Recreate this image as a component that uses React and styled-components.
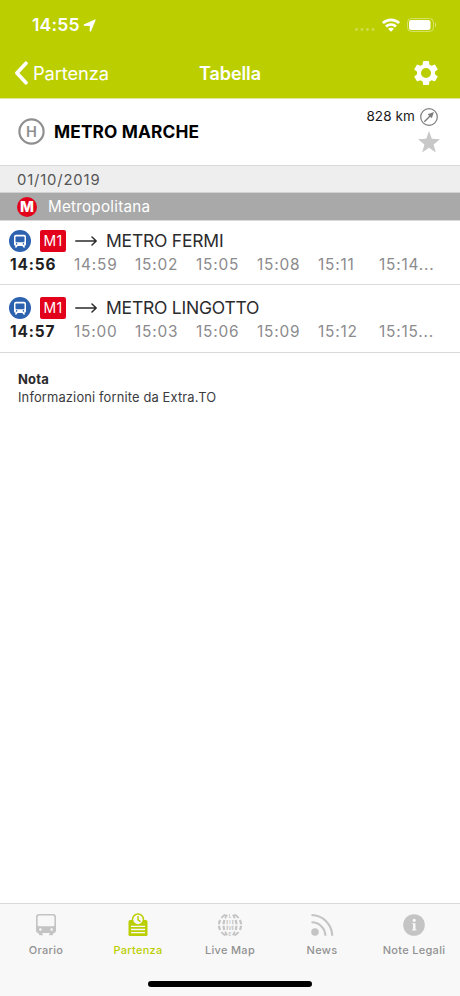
import React from 'react';
import styled, { createGlobalStyle } from 'styled-components';

// Colors
const colors = {
  lime: '#bbcf00',
  white: '#ffffff',
  text: '#2b2b2d',
  muted: '#8b8b8d',
  tabIcon: '#c4c4c4',
  line: '#d9d9d9',
  red: '#e2001a',
  blue: '#2d62ae'
};

const GlobalStyle = createGlobalStyle`
  * {
    box-sizing: border-box;
  }

  body {
    margin: 0;
    font-family: Inter, "Liberation Sans", sans-serif;
    background: ${colors.white};
    color: ${colors.text};
  }

  svg {
    display: block;
    flex: none;
  }
`;

const Screen = styled.div`
  display: flex;
  flex-direction: column;
  width: 460px;
  height: 996px;
  overflow: hidden;
  background: ${colors.white};
`;

const TopBar = styled.header`
  height: 98px;
  flex: none;
  background: ${colors.lime};
  color: ${colors.white};
`;

const StatusBar = styled.div`
  display: flex;
  justify-content: space-between;
  align-items: center;
  height: 50px;
  padding: 0 23px 0 32px;
`;

const StatusGroup = styled.div`
  display: flex;
  align-items: center;
  gap: ${(props) => props.$gap}px;
`;

const Clock = styled.span`
  width: 48px;
  font-size: 17.6px;
  font-weight: 600;
  line-height: 20px;
  letter-spacing: 0.15px;
  white-space: nowrap;
`;

const NavBar = styled.nav`
  display: grid;
  grid-template-columns: 1fr 100px 1fr;
  align-items: center;
  height: 46px;
  padding: 0 22px 0 14px;
`;

const BackButton = styled.button`
  display: flex;
  align-items: center;
  gap: 5px;
  padding: 0;
  border: none;
  background: none;
  color: inherit;
  font-family: inherit;
  font-size: 18.3px;
  line-height: 24px;
  letter-spacing: -0.1px;
`;

const Title = styled.h1`
  margin: 1px -8px 0 0;
  font-size: 18px;
  font-weight: 600;
  line-height: 24px;
  letter-spacing: -0.1px;
  text-align: center;
`;

const SettingsButton = styled.button`
  justify-self: end;
  padding: 0;
  border: none;
  background: none;
  color: inherit;
`;

const StopHeader = styled.section`
  display: flex;
  align-items: center;
  height: 67px;
  flex: none;
  padding: 0 20px 1px 18px;
  border-top: 1px solid #dde7a0;
`;

const StopName = styled.h2`
  flex: 1;
  margin: 0 0 0 9px;
  color: #000;
  font-size: 17.3px;
  font-weight: 700;
  line-height: 24px;
  letter-spacing: 0.15px;
`;

const StopActions = styled.div`
  display: flex;
  flex-direction: column;
  align-items: flex-end;
  gap: 5px;
  padding-bottom: 3px;
`;

const Distance = styled.div`
  display: flex;
  align-items: center;
  gap: 5px;
  padding-right: 2px;
  color: #1a1a1a;
  font-size: 13.5px;
  line-height: 19px;
  letter-spacing: 0.1px;
`;

const DateBar = styled.div`
  height: 28px;
  flex: none;
  padding-left: 17px;
  border-top: 1px solid ${colors.line};
  border-bottom: 1px solid #d2d2d2;
  background: #eeeeee;
  color: #555;
  font-size: 14.8px;
  line-height: 28px;
  letter-spacing: 0.85px;
`;

const CategoryBar = styled.div`
  display: flex;
  align-items: center;
  gap: 11px;
  height: 27px;
  flex: none;
  padding: 1px 0 0 17px;
  background: #a9a9a9;
  color: ${colors.white};
  font-size: 15.2px;
  line-height: 26px;
  letter-spacing: 0.25px;
`;

const Departure = styled.article`
  height: ${(props) => (props.$first ? 65 : 68)}px;
  flex: none;
  padding: ${(props) => (props.$first ? 8 : 11)}px 0 0 9px;
  border-top: ${(props) => (props.$first ? `1px solid ${colors.line}` : 'none')};
  border-bottom: 1px solid ${colors.line};
`;

const LineRow = styled.div`
  display: flex;
  align-items: center;
  height: 24px;
`;

const LineBadge = styled.span`
  width: 26px;
  height: 22px;
  margin: 0 9px;
  border-radius: 2px;
  background: ${colors.red};
  color: ${colors.white};
  font-size: 14px;
  line-height: 22px;
  letter-spacing: 0.3px;
  text-align: center;
`;

const Direction = styled.span`
  margin-left: 9px;
  font-size: 17.5px;
  line-height: 24px;
  letter-spacing: -0.22px;
`;

const Times = styled.div`
  display: grid;
  grid-template-columns: 64px repeat(5, 61px) 60px;
  padding-left: 1px;
  line-height: 24px;
`;

const Time = styled.span`
  color: ${(props) => (props.$next ? '#202022' : colors.muted)};
  font-size: 15.4px;
  font-weight: ${(props) => (props.$next ? 700 : 400)};
  letter-spacing: ${(props) => (props.$next ? 0.85 : 0.8)}px;
  white-space: nowrap;
`;

const Note = styled.section`
  flex: 1;
  padding: 17px 18px;
  font-size: 12.9px;
`;

const NoteTitle = styled.h3`
  margin: 0;
  font-size: 13px;
  font-weight: 700;
  line-height: 18px;
  letter-spacing: 0.2px;
`;

const NoteText = styled.p`
  margin: 0;
  color: #3c3c3e;
  line-height: 19px;
  letter-spacing: 0.15px;
`;

const Footer = styled.footer`
  display: flex;
  flex-direction: column;
  align-items: center;
  height: 93px;
  flex: none;
  border-top: 1px solid ${colors.line};
  background: #f8f8f8;
`;

const TabBar = styled.div`
  display: grid;
  grid-template-columns: repeat(5, 1fr);
  width: 460px;
  height: 77px;
`;

const Tab = styled.button`
  display: flex;
  flex-direction: column;
  align-items: center;
  padding: 9px 0 0;
  border: none;
  background: none;
  color: ${(props) => (props.$active ? colors.lime : colors.tabIcon)};
`;

const TabLabel = styled.span`
  margin-top: 5px;
  color: ${(props) => (props.$active ? colors.lime : '#929292')};
  font-family: Inter, "Liberation Sans", sans-serif;
  font-size: 11px;
  font-weight: 500;
  line-height: 16px;
  letter-spacing: 0.3px;
  white-space: nowrap;
`;

const HomeIndicator = styled.div`
  width: 164px;
  height: 6px;
  border-radius: 3px;
  background: #000;
`;

const SvgText = styled.text`
  font-family: Inter, "Liberation Sans", sans-serif;
  font-weight: ${(props) => props.$weight};
  letter-spacing: 0;
  text-anchor: middle;
`;

const LocationIcon = () => (
  <svg width="13" height="13" viewBox="0 0 13 13">
    <path d="M12 1 7.4 12V6.4L1.2 6z" fill="#fff" stroke="#fff" strokeWidth="1.3" strokeLinejoin="round" />
  </svg>
);

const SignalIcon = () => (
  <svg width="20" height="16" viewBox="0 0 20 16">
    {[1.5, 7, 12.5, 18].map((x) => (
      <circle key={x} cx={x} cy="12.5" r="1.4" fill="#fff" opacity=".3" />
    ))}
  </svg>
);

const WifiIcon = () => (
  <svg width="18" height="14" viewBox="0 0 18 14" fill="none" stroke="#fff" strokeWidth="2.7">
    <path d="M.9 5.1C5.4.8 12.6.8 17.1 5.1" />
    <path d="M4 8.5c2.8-2.7 7.2-2.7 10 0" />
    <path d="m9 13.7-2.9-2.9c1.6-1.5 4.2-1.5 5.8 0z" fill="#fff" stroke="none" />
  </svg>
);

const BatteryIcon = () => (
  <svg width="30" height="14" viewBox="0 0 30 14">
    <rect x=".5" y=".5" width="26" height="13" rx="4" fill="none" stroke="#fff" opacity=".4" />
    <rect x="2" y="2" width="21.5" height="10" rx="2.3" fill="#fff" />
    <path d="M28 4.8c1.6.6 1.6 3.8 0 4.4z" fill="#fff" opacity=".45" />
  </svg>
);

const BackIcon = () => (
  <svg width="14" height="24" viewBox="0 0 14 24" fill="none" stroke="#fff" strokeWidth="3.6" strokeLinecap="round" strokeLinejoin="round">
    <path d="M12 2.2 2.9 12 12 21.8" />
  </svg>
);

const GearIcon = () => (
  <svg width="24" height="24" viewBox="2 2 20 20" fill="currentColor">
    <path d="M19.43 12.98c.04-.32.07-.64.07-.98s-.03-.66-.07-.98l2.11-1.65c.19-.15.24-.42.12-.64l-2-3.46c-.12-.22-.39-.3-.61-.22l-2.49 1c-.52-.4-1.08-.73-1.69-.98l-.38-2.65C14.46 2.18 14.25 2 14 2h-4c-.25 0-.46.18-.49.42l-.38 2.65c-.61.25-1.17.59-1.69.98l-2.49-1c-.23-.09-.49 0-.61.22l-2 3.46c-.13.22-.07.49.12.64l2.11 1.65c-.04.32-.07.65-.07.98s.03.66.07.98l-2.11 1.65c-.19.15-.24.42-.12.64l2 3.46c.12.22.39.3.61.22l2.49-1c.52.4 1.08.73 1.69.98l.38 2.65c.03.24.24.42.49.42h4c.25 0 .46-.18.49-.42l.38-2.65c.61-.25 1.17-.59 1.69-.98l2.49 1c.23.09.49 0 .61-.22l2-3.46c.12-.22.07-.49-.12-.64zM12 16.2a4.2 4.2 0 1 1 0-8.4 4.2 4.2 0 0 1 0 8.4" />
  </svg>
);

const StopIcon = () => (
  <svg width="27" height="27" viewBox="0 0 27 27">
    <circle cx="13.5" cy="13.5" r="12.1" fill="none" stroke="#8f8f8f" strokeWidth="2.2" />
    <SvgText x="13.5" y="18.8" $weight={600} fontSize="14.6" fill="#8f8f8f">H</SvgText>
  </svg>
);

const CompassIcon = () => (
  <svg width="18" height="18" viewBox="0 0 18 18">
    <circle cx="9" cy="9" r="8.3" fill="none" stroke="#7d7d7d" strokeWidth="1.2" />
    <path d="m4.3 13.7 6-6" stroke="#7d7d7d" strokeWidth="1.4" />
    <path d="m14 4-2.2 6.3-4.1-4.1z" fill="#7d7d7d" />
  </svg>
);

const StarIcon = () => (
  <svg width="22" height="22" viewBox="0 0 22 22">
    <path d="m11 0 2.8 7.8 8.2.4-6.4 5.2 2.2 8-6.8-4.6-6.8 4.6 2.2-8L0 8.2l8.2-.4z" fill="#c8c8c8" />
  </svg>
);

const MetroIcon = () => (
  <svg width="20" height="20" viewBox="0 0 20 20">
    <circle cx="10" cy="10" r="10" fill={colors.red} />
    <SvgText x="10" y="15.3" $weight={800} fontSize="14.8" fill="#fff">M</SvgText>
  </svg>
);

const TrainIcon = () => (
  <svg width="22" height="22" viewBox="0 0 22 22">
    <circle cx="11" cy="11" r="11" fill={colors.blue} />
    <path d="M7 4.8h8q2 0 2 2v7.4q0 1.6-1.6 1.6l.8 1.7h-1.9l-.8-1.5H8.5l-.8 1.5H5.8l.8-1.7Q5 15.8 5 14.2V6.8q0-2 2-2z" fill="#fff" />
    <rect x="6.5" y="6.4" width="9" height="5.8" rx=".6" fill={colors.blue} />
    <circle cx="7.6" cy="13.9" r=".8" fill={colors.blue} />
    <circle cx="14.4" cy="13.9" r=".8" fill={colors.blue} />
  </svg>
);

const ArrowIcon = () => (
  <svg width="22" height="10" viewBox="0 0 22 10" fill="none" stroke={colors.text} strokeWidth="1.5" strokeLinecap="round" strokeLinejoin="round">
    <path d="M.8 5h20.4M17 1 21.2 5 17 9" />
  </svg>
);

const TimetableIcon = () => (
  <svg width="24" height="24" viewBox="0 0 24 24" fill="currentColor">
    <path fillRule="evenodd" d="M5 1h14q3 0 3 3v13.5q0 2.5-2.3 2.5l-1.2 2.2h-3.6l.9-2.2H8.2l.9 2.2H5.5L4.3 20Q2 20 2 17.5V4q0-3 3-3zm.3 1.6Q3.6 2.6 3.6 4.3V12q0 1.2 1.3 1.2h14.2q1.3 0 1.3-1.2V4.3q0-1.7-1.7-1.7zm1.1 12.6a1.3 1.3 0 1 0 0 2.6 1.3 1.3 0 0 0 0-2.6zm11.2 0a1.3 1.3 0 1 0 0 2.6 1.3 1.3 0 0 0 0-2.6z" />
  </svg>
);

const BoardIcon = () => (
  <svg width="24" height="24" viewBox="0 0 24 24">
    <path d="M4.2 7h15.6q1.7 0 1.7 1.7v13.2q0 1.1-1.1 1.1H3.6q-1.1 0-1.1-1.1V8.7Q2.5 7 4.2 7z" fill="currentColor" />
    <circle cx="12" cy="6.5" r="6.2" fill="currentColor" />
    <circle cx="12" cy="6.5" r="4.7" fill="#f8f8f8" />
    <path d="M12 3v3.8l2.6 1.8" fill="none" stroke="currentColor" strokeWidth="1.4" />
    <path d="M5 13.3h14M5 16.5h14M5 19.7h14" stroke="#f8f8f8" strokeWidth="1.3" />
  </svg>
);

// Globe made of meridian segments with LIVE running down the middle
const GlobeIcon = () => (
  <svg width="24" height="24" viewBox="0 0 24 24" fill="none" stroke="currentColor" strokeWidth="1.8">
    <path d="M7.5 1.6Q5 2.8 3.4 5M9.2 1.8Q8 3.3 7.2 5.4M16.5 1.6Q19 2.8 20.6 5M14.8 1.8Q16 3.3 16.8 5.4" />
    <path d="M2.2 7Q1.1 9 1 11.2M6.3 7Q5.7 9 5.6 11.2M21.8 7Q22.9 9 23 11.2M17.7 7Q18.3 9 18.4 11.2" strokeWidth="2.2" />
    <path d="M1 12.8Q1.1 15 2.2 17M5.6 12.8Q5.7 15 6.3 17M23 12.8Q22.9 15 21.8 17M18.4 12.8Q18.3 15 17.7 17" strokeWidth="2.2" />
    <path d="M7.5 22.4Q5 21.2 3.4 19M9.2 22.2Q8 20.7 7.2 18.6M16.5 22.4Q19 21.2 20.6 19M14.8 22.2Q16 20.7 16.8 18.6" />
    <path d="M9.2 7v4.2M14.8 7v4.2M9.2 12.8V17M14.8 12.8V17" strokeWidth="1.2" />
    {['L', 'I', 'V', 'E'].map((letter, index) => (
      <SvgText key={letter} x="12" y={4.8 + index * 6} $weight={700} fontSize="4.8" fill="currentColor" stroke="none">{letter}</SvgText>
    ))}
  </svg>
);

const NewsIcon = () => (
  <svg width="24" height="24" viewBox="0 0 24 24" fill="none" stroke="currentColor" strokeWidth="2.1">
    <circle cx="5" cy="19" r="3.8" fill="currentColor" stroke="none" />
    <path d="M1.5 9.3A13.6 13.6 0 0 1 15.4 22.8M1.5 2A21 21 0 0 1 22.2 22.8" />
  </svg>
);

const InfoIcon = () => (
  <svg width="24" height="24" viewBox="0 0 24 24">
    <circle cx="12" cy="12" r="10.8" fill="currentColor" />
    <circle cx="12.2" cy="7.3" r="1.6" fill="#f8f8f8" />
    <path d="M10 10.2h3.5v6.4h1v.9H10v-.9h1v-5.5h-1z" fill="#f8f8f8" />
  </svg>
);

const departures = [
  { direction: 'METRO FERMI', times: ['14:56', '14:59', '15:02', '15:05', '15:08', '15:11', '15:14...'] },
  { direction: 'METRO LINGOTTO', times: ['14:57', '15:00', '15:03', '15:06', '15:09', '15:12', '15:15...'] }
];

const tabs = [
  { label: 'Orario', Icon: TimetableIcon },
  { label: 'Partenza', Icon: BoardIcon, active: true },
  { label: 'Live Map', Icon: GlobeIcon },
  { label: 'News', Icon: NewsIcon },
  { label: 'Note Legali', Icon: InfoIcon }
];

const App = () => (
  <Screen>
    <GlobalStyle />
    <TopBar>
      <StatusBar>
        <StatusGroup $gap={3}>
          <Clock>14:55</Clock>
          <LocationIcon />
        </StatusGroup>
        <StatusGroup $gap={7}>
          <SignalIcon />
          <WifiIcon />
          <BatteryIcon />
        </StatusGroup>
      </StatusBar>
      <NavBar>
        <BackButton>
          <BackIcon />
          Partenza
        </BackButton>
        <Title>Tabella</Title>
        <SettingsButton aria-label="Impostazioni">
          <GearIcon />
        </SettingsButton>
      </NavBar>
    </TopBar>

    <StopHeader>
      <StopIcon />
      <StopName>METRO MARCHE</StopName>
      <StopActions>
        <Distance>
          828 km
          <CompassIcon />
        </Distance>
        <StarIcon />
      </StopActions>
    </StopHeader>

    <DateBar>01/10/2019</DateBar>
    <CategoryBar>
      <MetroIcon />
      Metropolitana
    </CategoryBar>

    {departures.map((item, position) => (
      <Departure key={item.direction} $first={position === 0}>
        <LineRow>
          <TrainIcon />
          <LineBadge>M1</LineBadge>
          <ArrowIcon />
          <Direction>{item.direction}</Direction>
        </LineRow>
        <Times>
          {item.times.map((time, index) => (
            <Time key={time} $next={index === 0}>{time}</Time>
          ))}
        </Times>
      </Departure>
    ))}

    <Note>
      <NoteTitle>Nota</NoteTitle>
      <NoteText>Informazioni fornite da Extra.TO</NoteText>
    </Note>

    <Footer>
      <TabBar>
        {tabs.map(({ label, Icon, active }) => (
          <Tab key={label} $active={active}>
            <Icon />
            <TabLabel $active={active}>{label}</TabLabel>
          </Tab>
        ))}
      </TabBar>
      <HomeIndicator />
    </Footer>
  </Screen>
);

export default App;
